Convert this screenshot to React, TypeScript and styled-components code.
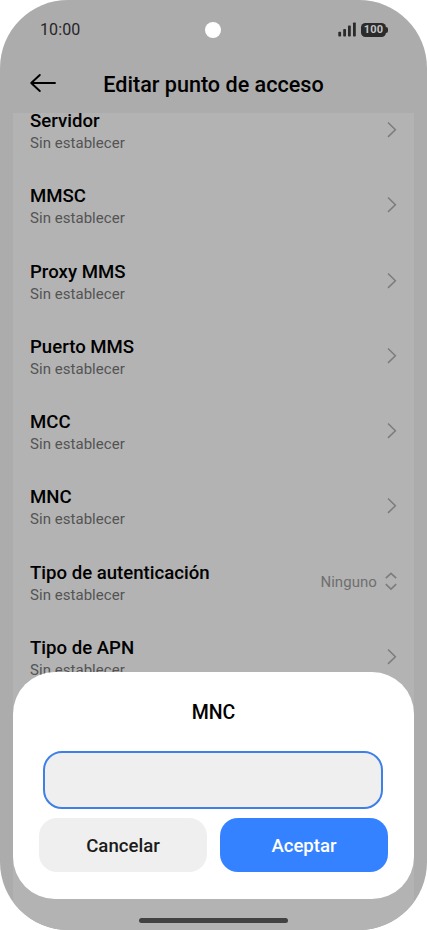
import React from 'react';
import styled, { createGlobalStyle } from 'styled-components';

const GlobalStyle = createGlobalStyle`
  * { box-sizing: border-box; }
  body { margin: 0; background: #fff; }
  button, input { font: inherit; }
`;

const Phone = styled.div`
  position: relative;
  width: 427px;
  height: 930px;
  overflow: hidden;
  display: flex;
  flex-direction: column;
  border-radius: 68px;
  background: #acacac;
  color: #000;
  font-family: Roboto, sans-serif;
`;

const StatusBar = styled.header`
  height: 58px;
  flex: none;
  display: grid;
  grid-template-columns: 1fr 16px 1fr;
  align-items: center;
  padding: 1px 39.5px 0 40px;
`;

const Clock = styled.time`
  font-size: 16px;
  line-height: 20px;
  letter-spacing: 0.1px;
  color: #262626;
`;

const Camera = styled.span`
  width: 16px;
  height: 16px;
  margin: 0 0 0 -0.7px;
  border-radius: 50%;
  background: #fff;
`;

const StatusIcons = styled.div`
  display: flex;
  justify-content: flex-end;
  align-items: center;
  gap: 5px;
`;

const Battery = styled.span`
  display: flex;
  align-items: center;
  &::after {
    content: '';
    width: 1.5px;
    height: 6px;
    border-radius: 0 2px 2px 0;
    background: #2b2b2b;
  }
`;

const BatteryLevel = styled.span`
  width: 25px;
  height: 14px;
  border-radius: 4.5px;
  background: #2b2b2b;
  color: #c4c4c4;
  font-size: 11px;
  font-weight: 700;
  line-height: 14.5px;
  letter-spacing: 0.2px;
  text-align: center;
`;

const TitleBar = styled.div`
  height: 55px;
  flex: none;
  display: grid;
  grid-template-columns: 28px 1fr 28px;
  align-items: center;
  padding: 0 29px;
`;

const BackButton = styled.button`
  display: flex;
  padding: 0;
  border: 0;
  background: none;
  color: #000;
  margin-top: -5px;
`;

const PageTitle = styled.h1`
  margin: -2px 0 0;
  font-size: 21.6px;
  line-height: 28px;
  font-weight: 500;
  text-align: center;
  white-space: nowrap;
`;

const Settings = styled.main`
  flex: 1;
  min-height: 0;
  overflow: hidden;
  margin: 0 13px;
  background: #b3b3b3;
`;

const SettingsList = styled.ul`
  margin: -21px 0 0;
  padding: 0;
  list-style: none;
`;

const Row = styled.li`
  height: 75.25px;
  display: flex;
  align-items: center;
  justify-content: space-between;
  padding: 0 17px;
`;

const RowLabel = styled.div`
  display: flex;
  flex-direction: column;
  padding-top: 2.8px;
`;

const RowTitle = styled.span`
  font-size: 18.6px;
  line-height: 24px;
  font-weight: 500;
`;

const RowNote = styled.span`
  font-size: 15px;
  line-height: 20px;
  letter-spacing: 0.04px;
  color: #545454;
`;

const RowValue = styled.span`
  display: flex;
  align-items: center;
  gap: 7px;
  padding-top: 1px;
  font-size: 15px;
  line-height: 20px;
  letter-spacing: 0.06px;
  color: #6f6f6f;
`;

const Sheet = styled.section`
  position: absolute;
  left: 13px;
  top: 671.5px;
  width: 401px;
  height: 227px;
  display: flex;
  flex-direction: column;
  padding: 27px 26px 26px;
  border-radius: 42px;
  background: #fff;
`;

const SheetTitle = styled.h2`
  margin: 0 0 24px;
  font-size: 19.5px;
  line-height: 28px;
  font-weight: 500;
  text-align: center;
`;

const Field = styled.input`
  width: 340px;
  height: 58.5px;
  margin: 0 4.4px 9px;
  padding: 0 16px;
  border: 2px solid #3f80e6;
  border-radius: 19px;
  background: #efefef;
  outline: none;
`;

const Actions = styled.div`
  display: grid;
  grid-template-columns: 1fr 1fr;
  gap: 13px;
`;

const ActionButton = styled.button<{ $primary?: boolean }>`
  height: 54px;
  padding: 2.5px 0 0;
  border: 0;
  border-radius: 18px;
  background: ${({ $primary }) => ($primary ? '#3482ff' : '#efefef')};
  color: ${({ $primary }) => ($primary ? '#fff' : '#1b1b1b')};
  font-size: 18.6px;
  font-weight: 500;
`;

const HomeIndicator = styled.div`
  position: absolute;
  left: 138.5px;
  bottom: 6.8px;
  width: 149px;
  height: 5px;
  border-radius: 3px;
  background: #424242;
`;

const SignalIcon = () => (
  <svg width="18" height="15" viewBox="0 0 18 15" fill="#2b2b2b">
    <rect x="0.3" y="9.8" width="2.8" height="4.7" rx="0.8" />
    <rect x="5.2" y="7" width="2.8" height="7.5" rx="0.8" />
    <rect x="10" y="3.6" width="2.8" height="10.9" rx="0.8" />
    <rect x="15" y="0.5" width="2.8" height="14" rx="0.8" />
  </svg>
);

const BackIcon = () => (
  <svg width="28" height="20" viewBox="0 0 28 20" fill="none" stroke="currentColor" strokeWidth="1.9" strokeLinecap="round" strokeLinejoin="round">
    <path d="M26 10H2.2M10.8 2L2.2 10l8.6 8" />
  </svg>
);

const ChevronIcon = () => (
  <svg width="12" height="18" viewBox="0 0 12 18" fill="none" stroke="#7c7c7c" strokeWidth="1.5">
    <path d="M3 1.5l7.4 7.2L3 15.9" />
  </svg>
);

const SelectorIcon = () => (
  <svg width="13" height="20" viewBox="0 0 13 20" fill="none" stroke="#7c7c7c" strokeWidth="1.6">
    <path d="M1.8 6.2L7 1.3l5.2 4.9M1.8 12.2L7 17.1l5.2-4.9" />
  </svg>
);

type Setting = { title: string; value?: string };

const settings: Setting[] = [
  { title: 'Servidor' },
  { title: 'MMSC' },
  { title: 'Proxy MMS' },
  { title: 'Puerto MMS' },
  { title: 'MCC' },
  { title: 'MNC' },
  { title: 'Tipo de autenticación', value: 'Ninguno' },
  { title: 'Tipo de APN' },
];

export default function App() {
  return (
    <>
      <GlobalStyle />
      <Phone>
        <StatusBar>
          <Clock>10:00</Clock>
          <Camera />
          <StatusIcons>
            <SignalIcon />
            <Battery>
              <BatteryLevel>100</BatteryLevel>
            </Battery>
          </StatusIcons>
        </StatusBar>
        <TitleBar>
          <BackButton aria-label="Atrás">
            <BackIcon />
          </BackButton>
          <PageTitle>Editar punto de acceso</PageTitle>
        </TitleBar>
        <Settings>
          <SettingsList>
            {settings.map(({ title, value }) => (
              <Row key={title}>
                <RowLabel>
                  <RowTitle>{title}</RowTitle>
                  <RowNote>Sin establecer</RowNote>
                </RowLabel>
                <RowValue>
                  {value}
                  {value ? <SelectorIcon /> : <ChevronIcon />}
                </RowValue>
              </Row>
            ))}
          </SettingsList>
        </Settings>
        <Sheet role="dialog" aria-label="MNC">
          <SheetTitle>MNC</SheetTitle>
          <Field aria-label="MNC" />
          <Actions>
            <ActionButton>Cancelar</ActionButton>
            <ActionButton $primary>Aceptar</ActionButton>
          </Actions>
        </Sheet>
        <HomeIndicator />
      </Phone>
    </>
  );
}
